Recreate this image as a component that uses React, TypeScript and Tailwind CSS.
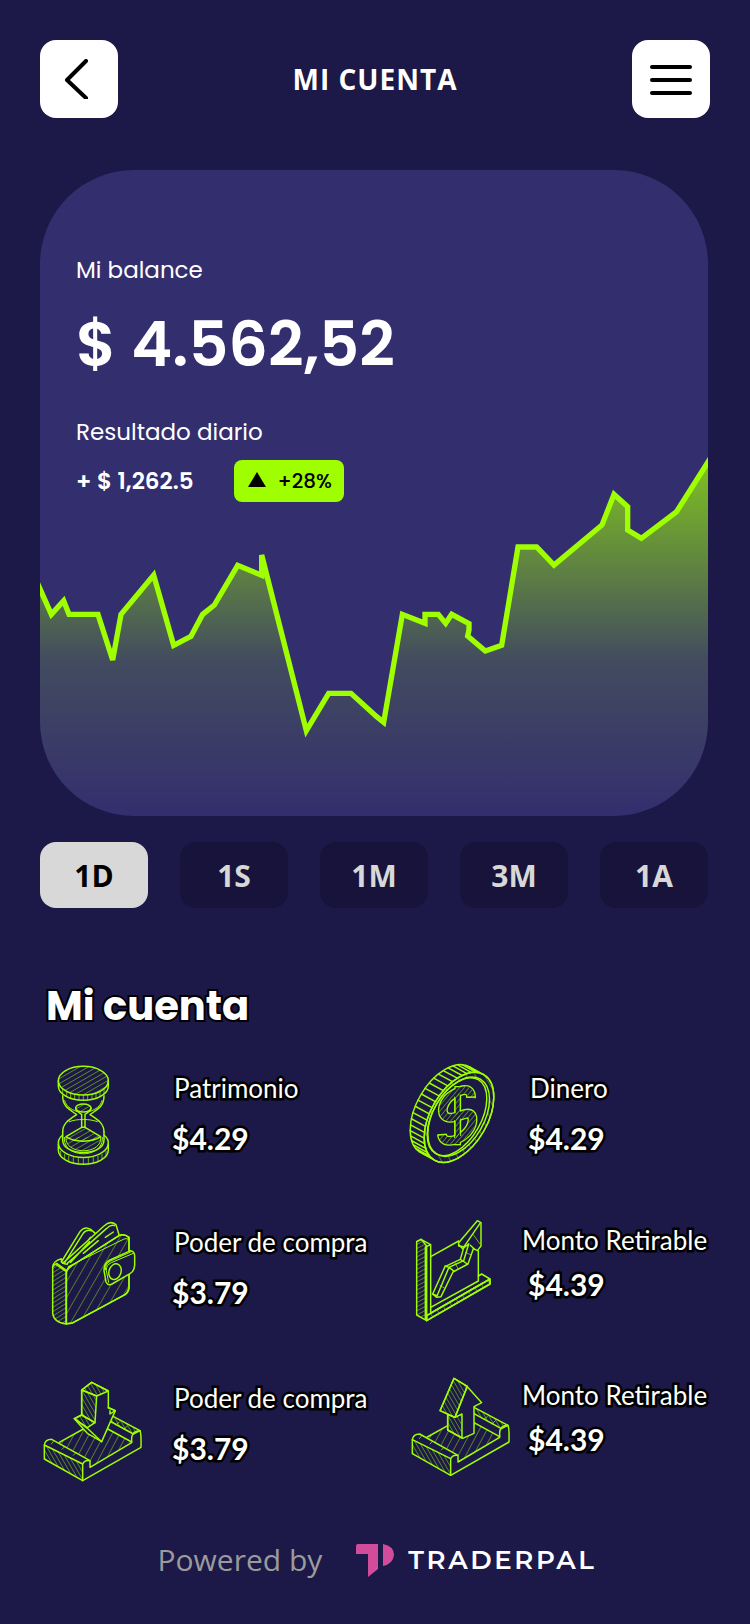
import { useState } from 'react';
import type { ReactNode } from 'react';

const LIME = '#9fff00';
const BG = '#1c1848';

const ranges = ['1D', '1S', '1M', '3M', '1A'];

type IconFrameProps = {
  viewBox: string;
  children: ReactNode;
};

const IconFrame = ({ viewBox, children }: IconFrameProps) => (
  <svg
    viewBox={viewBox}
    className="h-[112px] w-[104px] shrink-0"
    fill="none"
    stroke={LIME}
    strokeWidth="4.4"
    strokeLinecap="round"
    strokeLinejoin="round"
    aria-hidden="true"
  >
    {children}
  </svg>
);

type HatchProps = {
  id: string;
  gap: number;
  angle: number;
};

const Hatch = ({ id, gap, angle }: HatchProps) => (
  <pattern
    id={id}
    width={gap}
    height={gap}
    patternUnits="userSpaceOnUse"
    patternTransform={`rotate(${angle})`}
  >
    <path d={`M1 0V${gap}`} strokeWidth="2" strokeOpacity="0.75" />
  </pattern>
);

const HourglassIcon = () => (
  <IconFrame viewBox="30 33 312 336">
    <defs>
      <Hatch id="hourglass" gap={13} angle={60} />
    </defs>
    <ellipse cx="160" cy="92" rx="75" ry="43" fill="url(#hourglass)" />
    <path d="M85 92v16a75 43 0 0 0 150 0V92" />
    <path
      d="M98 118v14M110 126v14M122 131v14M134 134v15M147 136v15M160 136v15M173 136v15M186 134v15M198 131v14M210 126v14M222 118v14"
      strokeWidth="2"
    />
    <path d="M98 137c0 32 18 40 42 57c-24 16-42 26-42 52M222 137c0 32-18 40-42 57c24 16 42 26 42 52" />
    <path d="M104 152c4 16 18 26 36 32M216 152c-4 16-18 26-36 32" strokeWidth="3" />
    <ellipse cx="160" cy="174" rx="23" ry="12" fill="url(#hourglass)" />
    <path d="M137 174c0 11 12 14 18 19v39M183 174c0 11-12 14-18 19v39" />
    <path d="M118 215c22-9 62-9 84 0" strokeWidth="3" />
    <path d="M155 232l-47 28c24 18 80 18 104 0l-47-28z" fill="url(#hourglass)" />
    <path d="M98 246v24c0 50 124 50 124 0v-24" />
    <path d="M98 255A75 43 0 1 0 222 255" />
    <path d="M108 262c-6 54 110 54 104 0" fill="url(#hourglass)" strokeWidth="3" />
    <path d="M103 262c-6 66 120 66 114 0" strokeWidth="3" />
    <path d="M85 282v18a75 43 0 0 0 150 0v-18" />
    <path
      d="M92 304v14M104 313v14M116 319v15M130 323v15M145 325v16M160 326v16M175 325v16M190 323v15M204 319v15M216 313v14M228 304v14"
      strokeWidth="2"
    />
  </IconFrame>
);

// point on the coin's tilted edge
const edgePoint = (deg: number) => {
  const t = (deg * Math.PI) / 180;
  const tilt = -Math.PI / 3;
  const x = 148 * Math.cos(t);
  const y = 85 * Math.sin(t);
  return [
    207 + x * Math.cos(tilt) - y * Math.sin(tilt),
    202 + x * Math.sin(tilt) + y * Math.cos(tilt),
  ];
};

const CoinIcon = () => {
  const ridges = Array.from({ length: 45 }, (_, i) => edgePoint(i * 8));
  const dollar =
    'M243 144C244 108 212 120 190 133C160 150 146 192 172 202C200 212 238 172 247 202C252 236 220 262 194 270C170 276 158 270 156 254';

  return (
    <IconFrame viewBox="54 33 312 336">
      <defs>
        <Hatch id="coin" gap={24} angle={30} />
        <Hatch id="coinSign" gap={11} angle={40} />
      </defs>
      <ellipse cx="165" cy="179" rx="148" ry="85" transform="rotate(-60 165 179)" />
      {ridges.map(([x, y], i) => (
        <path key={i} d={`M${x} ${y}l-42-23`} />
      ))}
      <ellipse cx="207" cy="202" rx="148" ry="85" transform="rotate(-60 207 202)" fill={BG} />
      <ellipse
        cx="207"
        cy="202"
        rx="148"
        ry="85"
        transform="rotate(-60 207 202)"
        fill="url(#coin)"
      />
      <ellipse cx="206" cy="200" rx="130" ry="76" transform="rotate(-60 206 200)" fill={BG} />
      <ellipse cx="201" cy="200" rx="128" ry="72" transform="rotate(-60 201 200)" />
      <g strokeLinecap="butt">
        <path d="M203 108V286" strokeWidth="20" />
        <path d={dollar} strokeWidth="30" />
        <path d="M203 112V282" stroke={BG} strokeWidth="12" />
        <path d={dollar} stroke={BG} strokeWidth="22" />
        <path d="M203 130V265" stroke="url(#coinSign)" strokeWidth="12" />
        <path d={dollar} stroke="url(#coinSign)" strokeWidth="22" />
        <path d="M194 140v48M194 210v54M212 134v40M212 206v52" strokeWidth="3" />
        <path d="M229 142l28-1M142 255l28-2" />
      </g>
    </IconFrame>
  );
};

const WalletIcon = () => (
  <IconFrame viewBox="30 48 312 336">
    <defs>
      <Hatch id="walletFront" gap={24} angle={30} />
      <Hatch id="walletSide" gap={11} angle={58} />
    </defs>
    <path d="M94 186L150 95Q164 77 182 88L200 104" />
    <path d="M103 190L159 101Q168 88 184 92M181 112L172 126" />
    <path d="M98 190L222 78Q240 60 258 74L267 104" fill={BG} />
    <path d="M112 190L229 86Q242 72 254 77M122 187L178 125M160 160L205 122M226 112L250 96" />
    <path
      d="M109 371V218Q111 205 124 198L268 106Q282 100 297 112V262Q296 276 285 284L125 370Z"
      fill={BG}
    />
    <path
      d="M109 371V218Q111 205 124 198L268 106Q282 100 297 112V262Q296 276 285 284L125 370Z"
      fill="url(#walletFront)"
    />
    <path d="M114 200L280 118Q288 113 297 118" strokeWidth="3" />
    <path d="M68 200V340Q72 368 109 372V215L76 192Z" fill="url(#walletSide)" />
    <path d="M68 200Q70 184 94 176M94 178Q92 192 112 193M80 190L110 212" />
    <path
      d="M302 152Q314 154 314 168V196Q313 214 300 221L246 252Q234 258 228 246L222 212Q222 188 240 180Z"
      fill={BG}
    />
    <path d="M310 160L244 188Q228 195 229 212L236 247M306 154L240 184Q225 192 226 210" strokeWidth="3" />
    <ellipse cx="255" cy="215" rx="18" ry="24" transform="rotate(18 255 215)" />
  </IconFrame>
);

const ChartIcon = () => (
  <IconFrame viewBox="54 48 312 336">
    <defs>
      <Hatch id="chartSide" gap={11} angle={62} />
      <Hatch id="chartBase" gap={22} angle={-30} />
    </defs>
    <path d="M122 170L206 123M265 152V243L122 322" />
    <path d="M265 228L275 222L300 237V252L110 362V347L300 237" />
    <path d="M110 362V347L300 237V252Z" fill="url(#chartBase)" />
    <path d="M122 338L278 248" strokeWidth="3" />
    <path d="M80 125V345L110 362V138L93 118Z" fill="url(#chartSide)" />
    <path d="M80 125L93 118L122 134V340M106 141L122 134M106 141V358" />
    <path
      d="M128 282L165 200L211 178L222 140L206 138V128L262 62L273 68V138L262 152L250 146L234 192L189 216L153 290L140 292Z"
      fill={BG}
    />
    <path d="M141 288L177 202L221 182L236 132M128 282L142 288M165 198L177 202M177 202L190 212M211 178L232 192" />
    <path d="M206 134L218 146L236 132M218 146L270 70M241 136L254 148" />
    <path d="M150 256L163 264M196 190L204 206M228 158L242 164M250 104L270 132" strokeWidth="2" />
  </IconFrame>
);

const Tray = () => (
  <g>
    <path d="M88 247L160 207L228 204L305 248L180 322V302Z" fill="url(#trayFloor)" stroke="none" />
    <path d="M43 255V297L158 362V312Z" fill="url(#traySide)" />
    <path d="M43 255Q46 238 65 238L180 302V322L305 248V232Q308 212 330 212Q334 220 333 262L158 362" />
    <path d="M158 312Q164 300 178 302M88 247L160 207" />
    <path d="M228 204L305 246M228 177L310 222L330 212L228 158" fill="url(#traySide)" />
    <path d="M64 252L72 242M96 268L104 260M130 286L138 278M268 186L258 194M292 198L282 208" strokeWidth="2" />
  </g>
);

const TrayHatches = () => (
  <defs>
    <Hatch id="trayFloor" gap={20} angle={28} />
    <Hatch id="traySide" gap={11} angle={-30} />
  </defs>
);

const DepositIcon = () => (
  <IconFrame viewBox="30 33 312 336">
    <TrayHatches />
    <Tray />
    <path
      d="M155 90L185 67L235 93V144L256 152L215 245L172 220L133 176L155 165Z"
      fill={BG}
    />
    <path d="M155 90L185 67L235 93L200 108Z" fill="url(#traySide)" />
    <path d="M155 90L200 108L195 188L155 165Z" fill="url(#traySide)" />
    <path d="M133 176L155 165L195 188L172 203Z" fill="url(#traySide)" />
    <path d="M133 176L172 205L215 245M235 142L256 152L240 162V152" />
  </IconFrame>
);

const WithdrawIcon = () => (
  <IconFrame viewBox="54 33 312 336">
    <TrayHatches />
    <g transform="translate(24 -16)">
      <Tray />
    </g>
    <path d="M173 160V210L218 235L252 220V140L275 128L230 78L195 172Z" fill={BG} />
    <path d="M173 164V210L216 234V162L195 172Z" fill="url(#traySide)" />
    <path d="M192 55L232 79L195 172L150 152Z" fill={BG} />
    <path d="M192 55L232 79L195 172L150 152Z" fill="url(#traySide)" />
  </IconFrame>
);

type Account = {
  label: string;
  value: string;
  Icon: () => ReactNode;
  textClass: string;
  labelClass: string;
  valueClass: string;
};

const accounts: Account[] = [
  {
    label: 'Patrimonio',
    value: '$4.29',
    Icon: HourglassIcon,
    textClass: 'ml-7 pt-[11px]',
    labelClass: 'pl-0.5',
    valueClass: 'mt-4',
  },
  {
    label: 'Dinero',
    value: '$4.29',
    Icon: CoinIcon,
    textClass: 'ml-2 pt-[11px]',
    labelClass: 'pl-2.5',
    valueClass: 'mt-4 pl-2',
  },
  {
    label: 'Poder de compra',
    value: '$3.79',
    Icon: WalletIcon,
    textClass: 'ml-7 pt-2.5',
    labelClass: 'pl-0.5',
    valueClass: 'mt-4',
  },
  {
    label: 'Monto Retirable',
    value: '$4.39',
    Icon: ChartIcon,
    textClass: 'ml-2 pt-2',
    labelClass: 'pl-0.5',
    valueClass: 'mt-2.5 pl-2',
  },
  {
    label: 'Poder de compra',
    value: '$3.79',
    Icon: DepositIcon,
    textClass: 'ml-7 pt-[11px]',
    labelClass: 'pl-0.5',
    valueClass: 'mt-4',
  },
  {
    label: 'Monto Retirable',
    value: '$4.39',
    Icon: WithdrawIcon,
    textClass: 'ml-2 pt-2',
    labelClass: 'pl-0.5',
    valueClass: 'mt-2.5 pl-2',
  },
];

const LINE =
  'L64 523L101 482L117 523H204L248 660L273 523L371 405L431 616L483 589L518 523L553 495L623 376L695 406V345L829 872L896 760H963L1040 830L1061 847L1117 523L1185 550V523H1225L1247 550L1265 523L1317 551V570L1313 588L1366 633L1415 616L1464 321H1520L1572 375L1716 255L1752 163L1793 200V270L1834 295L1939 216L2034 66';

const BalanceChart = () => (
  <svg
    viewBox="30 48 2004 1080"
    preserveAspectRatio="none"
    className="absolute inset-x-0 bottom-0 h-[360px] w-full"
    fill="none"
    aria-hidden="true"
  >
    <defs>
      <linearGradient id="area" gradientUnits="userSpaceOnUse" x1="0" y1="48" x2="0" y2="1128">
        <stop offset="0" stopColor={LIME} stopOpacity="0.72" />
        <stop offset="0.57" stopColor={LIME} stopOpacity="0.14" />
        <stop offset="1" stopColor={LIME} stopOpacity="0" />
      </linearGradient>
    </defs>
    <path d={`M30 447${LINE}V1128H30Z`} fill="url(#area)" />
    <path d={`M20 424${LINE}L2044 50`} stroke={LIME} strokeWidth="16" />
  </svg>
);

const App = () => {
  const [range, setRange] = useState('1D');

  return (
    <div className="min-h-screen bg-[#1c1848] pb-10 font-['Open_Sans','Noto_Sans',sans-serif] text-white">
      <header className="flex items-center justify-between px-10 pt-10">
        <button
          type="button"
          aria-label="Volver"
          className="flex size-[78px] items-center justify-center rounded-2xl bg-white"
        >
          <svg viewBox="0 0 40 40" className="size-10" fill="none" stroke="#000" strokeWidth="4">
            <path d="M27 2L8 21L27 39" strokeLinecap="round" strokeLinejoin="round" />
          </svg>
        </button>
        <h1 className="text-[28px] leading-10 font-bold tracking-[1px]">MI CUENTA</h1>
        <button
          type="button"
          aria-label="Menú"
          className="flex size-[78px] items-center justify-center rounded-2xl bg-white"
        >
          <svg viewBox="0 0 42 32" className="h-8 w-[42px]" stroke="#000" strokeWidth="4">
            <path d="M2 4H40M2 17H40M2 30H40" strokeLinecap="round" />
          </svg>
        </button>
      </header>

      <main className="pr-[42px] pl-10">
        <section className="relative mt-[52px] overflow-hidden rounded-[94px] bg-[#332e6e] pb-[314px] pl-9 font-['Poppins','Inter',sans-serif]">
          <BalanceChart />
          <div className="relative pt-[84px]">
            <p className="text-[23px] leading-8">Mi balance</p>
            <p className="mt-[17px] text-[62px] leading-[84px] font-semibold">$ 4.562,52</p>
            <p className="mt-[29px] text-[23px] leading-8">Resultado diario</p>
            <div className="mt-3 flex items-center">
              <p className="w-[158px] text-[23px] leading-8 font-semibold">+ $ 1,262.5</p>
              <div className="flex h-[42px] w-[110px] items-center justify-between rounded-lg bg-[#9fff00] pr-3 pl-[14px] text-black">
                <svg viewBox="0 0 18 15" className="mb-1 h-[15px] w-[18px]">
                  <path d="M9 0L18 15H0Z" />
                </svg>
                <span className="text-xl font-medium">+28%</span>
              </div>
            </div>
          </div>
        </section>

        <div className="mt-[26px] flex justify-between">
          {ranges.map((item) => (
            <button
              key={item}
              type="button"
              aria-pressed={item === range}
              onClick={() => setRange(item)}
              className={`h-[66px] w-[108px] rounded-2xl text-[30px] font-bold ${
                item === range ? 'bg-[#d8d8d8] text-black' : 'bg-[#18133a] text-[#d8d8d8]'
              }`}
            >
              {item}
            </button>
          ))}
        </div>

        <h2 className="mt-[74px] pl-1.5 font-['Poppins','Inter',sans-serif] text-[40px] leading-[48px] font-bold [paint-order:stroke_fill] [-webkit-text-stroke:4px_#000]">
          Mi cuenta
        </h2>

        <div className="mt-[31px] grid grid-cols-[368px_auto] gap-y-[43px] font-['Lato',sans-serif] whitespace-nowrap">
          {accounts.map(({ label, value, Icon, textClass, labelClass, valueClass }, i) => (
            <div key={i} className="flex">
              <Icon />
              <div
                className={`[paint-order:stroke_fill] [-webkit-text-stroke:5px_#000] ${textClass}`}
              >
                <p className={`text-[26px] leading-8 ${labelClass}`}>{label}</p>
                <p className={`text-[30px] leading-9 font-bold ${valueClass}`}>{value}</p>
              </div>
            </div>
          ))}
        </div>
      </main>

      <footer className="mt-[57px] flex items-center justify-center pl-1">
        <span className="text-[30px] leading-10 text-[#9b9b9b]">Powered by</span>
        <div className="ml-[34px] flex items-center">
          <svg viewBox="0 0 38 33" className="h-[33px] w-[38px]" fill="#d14d9b">
            <path d="M2 0H22V25L12 33V10H0V2Q0 0 2 0ZM27 0Q38 2 38 11Q37 20 27 22Z" />
          </svg>
          <span className="ml-3.5 font-['Montserrat','Lato',sans-serif] text-[26px] leading-10 font-semibold tracking-widest">
            TRADERPAL
          </span>
        </div>
      </footer>
    </div>
  );
};

export default App;
